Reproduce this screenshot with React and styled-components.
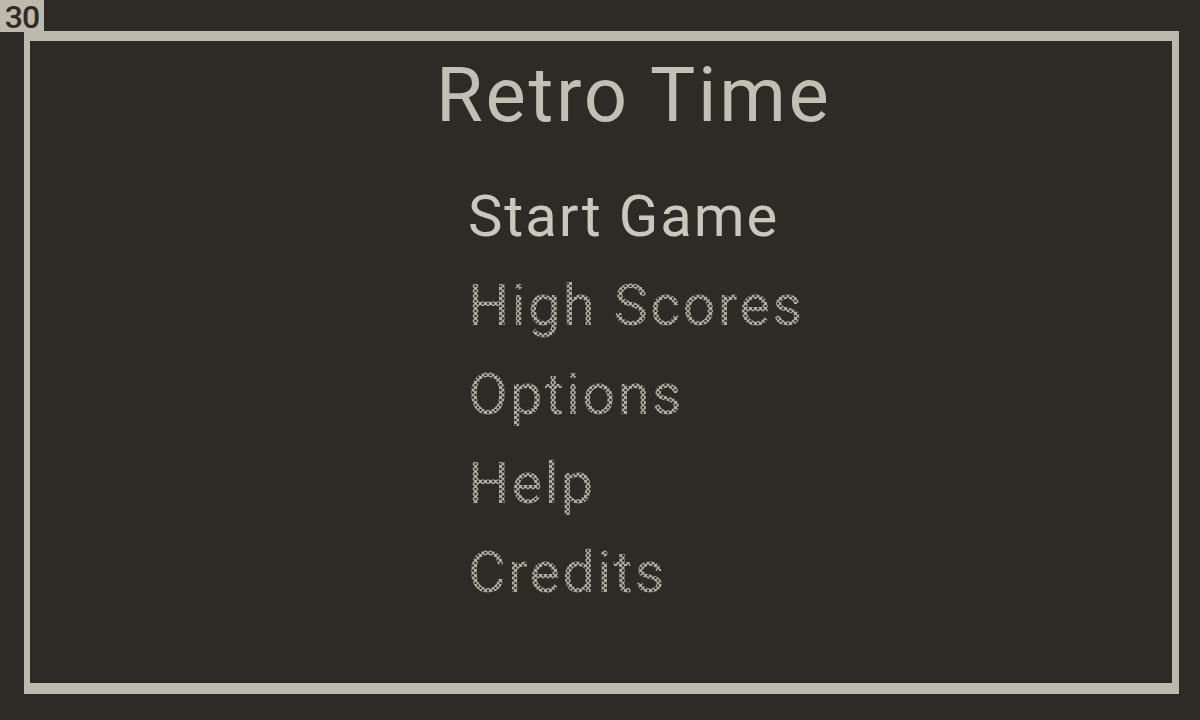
import React from "react";
import styled, { createGlobalStyle, css } from "styled-components";

const ink = "#bdb9ad";
const bg = "#2e2a25";

const GlobalStyle = createGlobalStyle`
  html, body {
    margin: 0;
    padding: 0;
    background: ${bg};
  }

  body {
    font-family: Roboto, "Liberation Sans", sans-serif;
  }
`;

const Screen = styled.div`
  position: relative;
  width: 1200px;
  height: 720px;
  box-sizing: border-box;
  padding: 31px 21px 26px 24px;
  display: flex;
  background: ${bg};
  overflow: hidden;
`;

// frame-rate readout pinned to the corner
const FpsCounter = styled.div`
  position: absolute;
  left: 0;
  top: 0;
  width: 44px;
  box-sizing: border-box;
  padding-top: 3px;
  background: ${ink};
  color: ${bg};
  font-family: Roboto, "Liberation Sans", sans-serif;
  font-size: 32px;
  font-weight: 500;
  line-height: 29px;
  text-align: center;
  letter-spacing: -1px;
`;

const Frame = styled.main`
  flex: 1;
  box-sizing: border-box;
  border-style: solid;
  border-color: ${ink};
  border-width: 10px 7px 11px 6px;
  display: flex;
  flex-direction: column;
  padding-top: 16px;
`;

const Title = styled.h1`
  margin: 0 0 0 406px;
  font-size: 76px;
  font-weight: 400;
  line-height: 1;
  letter-spacing: 2.7px;
  color: #c3bfb4;
`;

const Menu = styled.ul`
  list-style: none;
  margin: 39px 0 0 438px;
  padding: 0;
`;

// unselected entries are drawn as a diagonal dot grid
const dithered = css`
  color: transparent;
  background-image:
    radial-gradient(circle at center, #b0aca0 1.4px, transparent 2px),
    radial-gradient(circle at center, #b0aca0 1.4px, transparent 2px);
  background-size: 5px 5px;
  background-position: 0 0, 2.5px 2.5px;
  -webkit-background-clip: text;
  background-clip: text;
  letter-spacing: 2.2px;
`;

const Item = styled.li`
  font-size: 58px;
  line-height: 89px;
  font-weight: 400;
  letter-spacing: 1.9px;
  width: max-content;
  color: #cbc7bc;
  ${(p) => !p.$active && dithered}
`;

const items = ["Start Game", "High Scores", "Options", "Help", "Credits"];

export default function App() {
  return (
    <>
      <GlobalStyle />
      <Screen>
        <FpsCounter>30</FpsCounter>
        <Frame>
          <Title>Retro Time</Title>
          <Menu>
            {items.map((label, i) => (
              <Item key={label} $active={i === 0}>
                {label}
              </Item>
            ))}
          </Menu>
        </Frame>
      </Screen>
    </>
  );
}
